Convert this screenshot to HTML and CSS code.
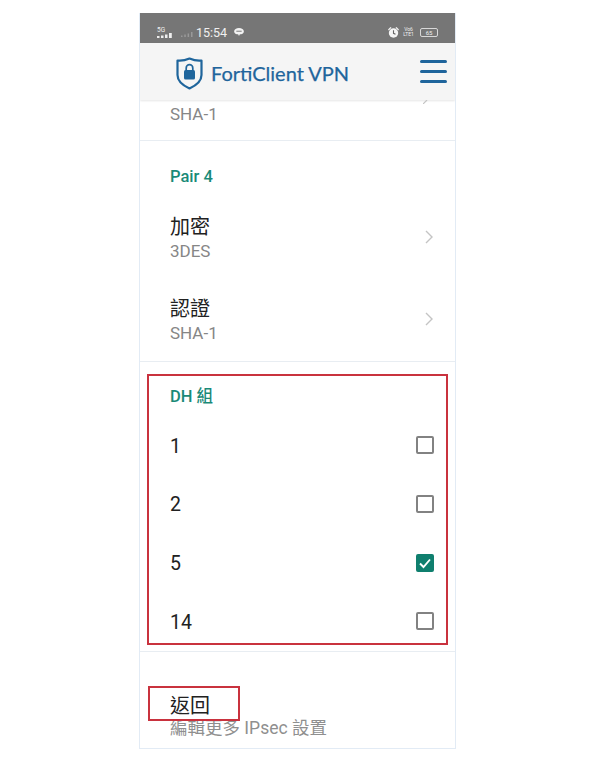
FILE: index.html
```html
<!DOCTYPE html>
<html lang="zh-Hant">
<head>
<meta charset="utf-8">
<title>FortiClient VPN</title>
<link rel="stylesheet" href="styles.css">
</head>
<body>
<div class="phone">
  <div class="status">
    <div class="status-left">
      <span class="net"><span class="net-label">5G</span>
        <svg class="bars" width="15" height="5" viewBox="0 0 15 5"><path d="M0 3h2.500v2H0zM4 2.500h2.500V5H4zM8 1.500h2.500V5H8zM12 0h2.800v5H12z" fill="#eee"/></svg>
      </span>
      <svg class="bars-dim" width="12" height="6" viewBox="0 0 12 6"><path d="M0 4.500h1.500V6H0zM3.300 3.500h1.500V6H3.300zM6.600 2.500h1.500V6H6.600zM10 1h1.500v5H10z" fill="#999"/></svg>
      <span class="clock">15:54</span>
      <svg class="bubble" width="10" height="8" viewBox="0 0 11 9"><path d="M5.500 0C8.500 0 11 1.500 11 3.800S8.500 7 6.500 7L5.500 9 4.500 7C2.500 7 0 6 0 3.800S2.500 0 5.500 0z" fill="#f2f2f2"/><rect x="2.500" y="3" width="6" height="1.300" fill="#8a8a8a"/></svg>
    </div>
    <div class="status-right">
      <svg class="alarm" width="11" height="11" viewBox="0 0 11 11"><circle cx="5.500" cy="6" r="4.700" fill="#f5f5f5"/><path d="M0 2.500 2.500 0l1 .8L.8 3.400zM11 2.500 8.500 0l-1 .8 2.700 2.600z" fill="#f5f5f5"/><path d="M5.500 3.300v3l2 1" stroke="#666" stroke-width="1.100" fill="none"/></svg>
      <span class="volte">Vo6<br>LTE1</span>
      <span class="battery">65</span>
    </div>
  </div>

  <header class="header">
    <svg class="shield" width="27" height="33" viewBox="0 0 27 33">
      <path d="M1.500 3.500C6 4 9.500 3.200 13.500 1.500 17.500 3.200 21 4 25.500 3.500V18c0 6.500-5.500 10.500-12 13.500C7 28.500 1.500 24.500 1.500 18z" fill="none" stroke="#1f659c" stroke-width="2.200" stroke-linejoin="round"/>
      <rect x="8" y="13" width="11" height="9.500" rx="1.500" fill="#1f659c"/>
      <path d="M10.200 13.500V11a3.300 3.300 0 0 1 6.600 0v2.500" fill="none" stroke="#1f659c" stroke-width="1.700"/>
    </svg>
    <span class="brand">FortiClient VPN</span>
    <div class="menu"><i></i><i></i><i></i></div>
  </header>

  <main class="content">
    <section class="section section-top">
      <div class="sub">SHA-1</div>
      <svg class="tail" width="5" height="4" viewBox="0 0 5 4"><path d="M0 4 4 0" stroke="#c4c4c4" stroke-width="1.200"/></svg>
    </section>

    <section class="section section-pair">
      <h2 class="title">Pair 4</h2>
      <div class="row">
        <div class="row-text"><div class="main">加密</div><div class="sub">3DES</div></div>
        <svg class="chevron" width="8" height="14" viewBox="0 0 8 14"><path d="M1 1l6 6-6 6" fill="none" stroke="#c4c4c4" stroke-width="1.400"/></svg>
      </div>
      <div class="row">
        <div class="row-text"><div class="main">認證</div><div class="sub">SHA-1</div></div>
        <svg class="chevron" width="8" height="14" viewBox="0 0 8 14"><path d="M1 1l6 6-6 6" fill="none" stroke="#c4c4c4" stroke-width="1.400"/></svg>
      </div>
    </section>

    <section class="section section-dh">
      <h2 class="title">DH 組</h2>
      <div class="check-row"><span class="num">1</span><span class="box"></span></div>
      <div class="check-row"><span class="num">2</span><span class="box"></span></div>
      <div class="check-row"><span class="num">5</span>
        <span class="box box-on"><svg width="14" height="12" viewBox="0 0 14 12"><path d="M2 6.500l3.500 3.500L12 2.500" fill="none" stroke="#fff" stroke-width="1.900"/></svg></span>
      </div>
      <div class="check-row"><span class="num">14</span><span class="box"></span></div>
    </section>

    <section class="section section-back">
      <div class="main">返回</div>
      <div class="sub sub-back">編輯更多 IPsec 設置</div>
    </section>
  </main>

  <div class="mark mark-dh"></div>
  <div class="mark mark-back"></div>
</div>
</body>
</html>
```

FILE: styles.css
```css
* { box-sizing: border-box; }
html, body { margin: 0; padding: 0; background: #fff; }
body {
  height: 758px;
  overflow: hidden;
  padding: 13px 0 0 139px;
  font-family: Roboto, "Noto Sans CJK TC", sans-serif;
}
.phone {
  position: relative;
  width: 317px;
  height: 736px;
  border: 1px solid #e2ebf5;
  border-top: 0;
  overflow: hidden;
  background: #fff;
}

/* status bar */
.status {
  height: 30px;
  background: #767676;
  display: flex;
  justify-content: space-between;
  align-items: center;
  padding: 8px 17px 0 17px;
  color: #f0f0f0;
}
.status-left, .status-right { display: flex; align-items: center; }
.net { display: flex; flex-direction: column; width: 16px; }
.net-label { font-size: 6.500px; line-height: 6px; }
.bars { display: block; }
.bars-dim { margin: 3px 0 0 8px; }
.clock { font-size: 12.500px; margin-left: 3px; }
.bubble { margin-left: 7px; }
.alarm { margin-right: 1px; }
.volte { font-size: 5px; line-height: 5.500px; width: 17px; text-align: center; margin-right: 3px; }
.battery {
  width: 18px;
  height: 9px;
  border: 1px solid #d8d8d8;
  border-radius: 2px;
  font-size: 6px;
  line-height: 7px;
  text-align: center;
}

/* app header */
.header {
  height: 57px;
  background: #f5f5f5;
  display: flex;
  align-items: center;
  padding: 0 8px 0 36px;
  box-shadow: 0 1px 2px rgba(0,0,0,.1);
  position: relative;
}
.shield { flex: none; margin-top: 4px; }
.brand {
  font-family: Lato, sans-serif;
  font-size: 20px;
  color: #1f659c;
  -webkit-text-stroke: .25px #1f659c;
  margin: 2px 0 0 8px;
  flex: 1;
}
.menu { width: 27px; display: flex; flex-direction: column; gap: 7px; }
.menu i { display: block; height: 3px; border-radius: 1.500px; background: #1f659c; }

/* content */
.content { height: 649px; }
.section { padding: 0 20px 0 30px; border-bottom: 1px solid #e8edf2; position: relative; }
.section-top { height: 41px; padding-top: 2px; }
.section-pair { padding-top: 21px; height: 221px; }
.section-dh { padding-top: 20px; height: 290px; }
.section-back { padding-top: 41px; border-bottom: 0; }

.title {
  margin: 0;
  font-size: 16.500px;
  font-weight: 500;
  line-height: 30px;
  color: #1a8a78;
}
.section-pair .title { margin-bottom: 5px; }
.section-dh .title { margin-bottom: 4px; }

.main { font-size: 20px; line-height: 26px; color: #212121; }
.sub { font-size: 17px; line-height: 24px; color: #868686; }
.sub-back { line-height: 22px; font-size: 17.500px; color: #8f8f8f; margin-top: -2px; }
.tail { position: absolute; right: 27px; top: 0; }

.row {
  height: 82px;
  display: flex;
  align-items: center;
  justify-content: space-between;
  padding-right: 2px;
}
.row-text { padding-top: 2px; }
.row-text .sub { margin: -1px 0 1px; }
.chevron { flex: none; margin-bottom: 2px; }

.check-row {
  height: 58.670px;
  display: flex;
  align-items: center;
  justify-content: space-between;
  padding-right: 1px;
}
.num { font-size: 19.500px; color: #212121; padding-top: 2px; }
.box {
  width: 18px;
  height: 18px;
  border: 2px solid #828282;
  border-radius: 2px;
  display: flex;
  align-items: center;
  justify-content: center;
}
.box-on { background: #0f7f6e; border-color: #0f7f6e; }

/* red annotation frames drawn over the screenshot */
.mark { position: absolute; border: 2px solid #c9323e; pointer-events: none; }
.mark-dh { left: 7px; top: 361px; width: 301px; height: 271px; }
.mark-back { left: 8px; top: 673px; width: 92px; height: 35px; }
```
